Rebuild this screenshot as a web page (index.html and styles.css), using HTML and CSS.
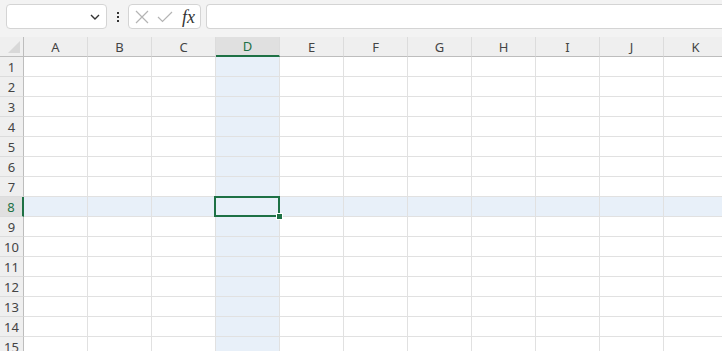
FILE: index.html
```html
<!DOCTYPE html>
<html>
<head>
<meta charset="utf-8">
<link rel="stylesheet" href="styles.css">
</head>
<body>
<div class="toolbar">
  <div class="namebox">
    <svg class="chev" width="10" height="6" viewBox="0 0 10 6"><path d="M1 1 L5 5 L9 1" fill="none" stroke="#333" stroke-width="1.4"/></svg>
  </div>
  <div class="dots"><span></span><span></span><span></span></div>
  <div class="fbtns">
    <svg width="14" height="14" viewBox="0 0 14 14"><path d="M1 1 L13 13 M13 1 L1 13" stroke="#b4b4b4" stroke-width="1.2" fill="none"/></svg>
    <svg width="16" height="12" viewBox="0 0 16 12"><path d="M1 6 L5.5 10.5 L15 1" stroke="#b4b4b4" stroke-width="1.2" fill="none"/></svg>
    <span class="fx">fx</span>
  </div>
  <div class="finput"></div>
</div>
<div class="sheet" id="sheet"></div>
<script src="app.js"></script>
</body>
</html>
```
FILE: app.js
```js
const sheet = document.getElementById('sheet');
const cols = ['A','B','C','D','E','F','G','H','I','J','K'];
let html = '<div class="corner"><div class="tri"></div></div>';
cols.forEach(c => { html += '<div class="ch' + (c === 'D' ? ' sel' : '') + '">' + c + '</div>'; });
for (let r = 1; r <= 15; r++) {
  html += '<div class="rh' + (r === 8 ? ' sel' : '') + '">' + r + '</div>';
  cols.forEach(c => {
    let cls = 'cell';
    if (c === 'D' || r === 8) cls += ' hl';
    html += '<div class="' + cls + '">' + (c === 'D' && r === 8 ? '<div class="active"><div class="handle"></div></div>' : '') + '</div>';
  });
}
sheet.innerHTML = html;
```
FILE: styles.css
```css
html, body { margin: 0; padding: 0; }
body {
  width: 722px; height: 351px; overflow: hidden;
  background: #f3f3f3;
  font-family: "Noto Sans", "Open Sans", sans-serif;
}
.toolbar {
  height: 37px; box-sizing: border-box;
  padding: 4px 0 0 6px;
  display: flex; align-items: flex-start;
}
.namebox {
  width: 101px; height: 25px; box-sizing: border-box;
  background: #fff; border: 1px solid #d4d4d4; border-radius: 4px;
  display: flex; align-items: center; justify-content: flex-end;
  padding-right: 6px;
}
.dots {
  width: 21px; height: 25px;
  display: flex; flex-direction: column; align-items: center; justify-content: center; gap: 2px;
}
.dots span { width: 2px; height: 2px; background: #333; }
.fbtns {
  width: 73px; height: 25px; box-sizing: border-box;
  background: #fff; border: 1px solid #d4d4d4; border-radius: 4px;
  display: flex; align-items: center; padding-left: 6px; gap: 8px;
}
.fx {
  font-family: "Liberation Serif", "DejaVu Serif", serif; font-style: italic;
  font-size: 18px; color: #333; margin-left: 1px; line-height: 1;
}
.finput {
  margin-left: 5px; flex: 1; height: 25px; box-sizing: border-box;
  background: #fff; border: 1px solid #d4d4d4; border-right: none;
  border-radius: 4px 0 0 4px;
}
.sheet {
  display: grid;
  grid-template-columns: 24px repeat(11, 64px);
  grid-auto-rows: 20px;
  background: #fff;
  font-size: 13px; color: #444;
}
.corner, .ch {
  background: #efefef; box-sizing: border-box;
  border-bottom: 1px solid #bdbdbd; border-right: 1px solid #dcdcdc;
}
.corner { position: relative; border-right-color: #bdbdbd; }
.tri {
  position: absolute; right: 3px; bottom: 3px; width: 0; height: 0;
  border-left: 12px solid transparent; border-bottom: 12px solid #d8d8d8;
}
.ch { display: flex; align-items: center; justify-content: center; }
.ch.sel { background: #e0e0e0; border-bottom: 2px solid #1e7145; color: #1e7145; }
.rh {
  background: #efefef; box-sizing: border-box;
  border-right: 1px solid #bdbdbd; border-bottom: 1px solid #dcdcdc;
  display: flex; align-items: center; justify-content: center;
}
.rh.sel { background: #e0e0e0; border-right: 2px solid #1e7145; color: #1e7145; }
.cell {
  box-sizing: border-box; position: relative;
  border-right: 1px solid #e1e1e1; border-bottom: 1px solid #e1e1e1;
}
.cell.hl { background: #e8f0f9; }
.active {
  position: absolute; left: -2px; top: -1px; right: -1px; bottom: -1px;
  border: 2px solid #1e7145; z-index: 2;
}
.handle {
  position: absolute; right: -5px; bottom: -5px; width: 5px; height: 5px;
  background: #1e7145; border: 1px solid #fff;
}
```
